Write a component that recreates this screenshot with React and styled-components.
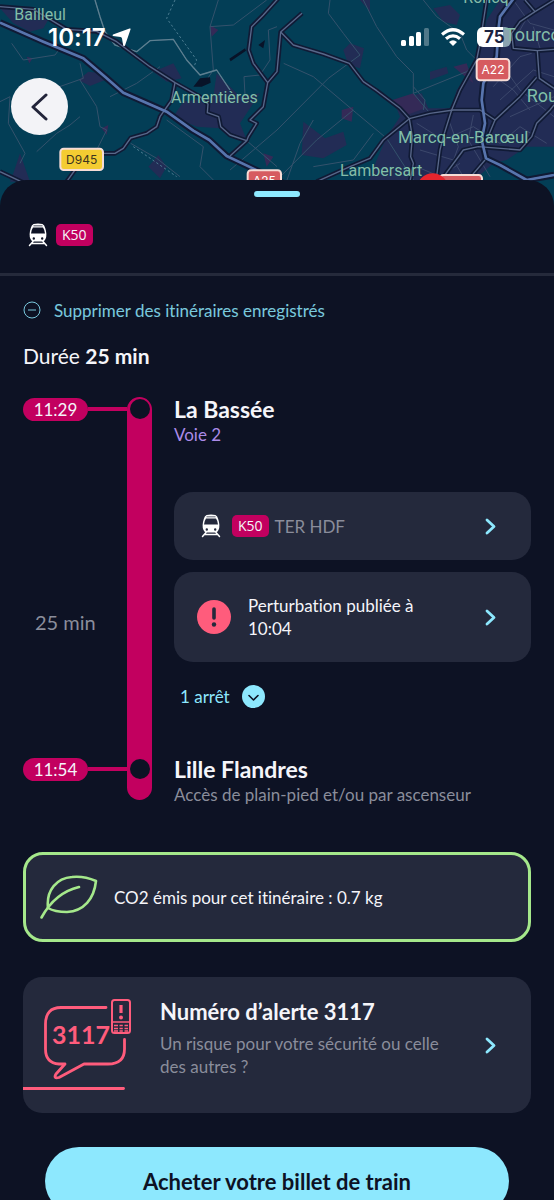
import React from "react";
import styled, { createGlobalStyle } from "styled-components";

const c = {
  night: "#0d1224",
  card: "#24293c",
  line: "#252a3b",
  magenta: "#c2005f",
  cyan: "#8de8fe",
  white: "#f5f5fa",
  grey: "#8a8d9b",
  coral: "#ff5c7c",
  green: "#a5e88b",
  violet: "#ab8be8",
};

const Global = createGlobalStyle`
  * { box-sizing: border-box; }
  body { margin: 0; background: ${c.night}; }
  button { font: inherit; color: inherit; border: 0; padding: 0; background: none; text-align: left; cursor: pointer; }
  h1, h2, p { margin: 0; }
  svg { display: block; flex: none; }
`;

const Screen = styled.div`
  height: 100vh;
  display: flex;
  flex-direction: column;
  overflow: hidden;
  background: ${c.night};
  color: ${c.white};
  font-family: Lato, "Open Sans", sans-serif;
  font-size: 17px;
  line-height: 23px;
  font-variant-ligatures: none;
`;

const MapArea = styled.header`
  position: relative;
  flex: none;
  height: 208px;
  background: #033e56;
`;

const MapSvg = styled.svg`
  width: 100%;
  height: 100%;
`;

const StatusBar = styled.div`
  position: absolute;
  inset: 22px 43px auto 48px;
  height: 30px;
  display: flex;
  align-items: center;
  gap: 12px;
  color: #fff;
  font-family: Inter, sans-serif;
`;

const Clock = styled.div`
  display: flex;
  align-items: center;
  gap: 6px;
  margin-right: auto;
  font-size: 24px;
  font-weight: 600;
`;

const Battery = styled.div`
  width: 34px;
  height: 20px;
  padding-left: 7px;
  border-radius: 6px;
  background: linear-gradient(90deg, #fff 76%, #8ba3b0 76%);
  color: #1c2340;
  font-size: 17px;
  font-weight: 700;
  line-height: 20px;
`;

const BackButton = styled.button`
  position: absolute;
  top: 78px;
  left: 11px;
  width: 57px;
  height: 57px;
  display: grid;
  place-items: center;
  border-radius: 50%;
  background: #f3f3f7;
`;

const Sheet = styled.main`
  position: relative;
  flex: 1;
  min-height: 0;
  margin-top: -28px;
  padding-top: 11px;
  overflow-y: auto;
  scrollbar-width: none;
  border-radius: 26px 26px 0 0;
  background: ${c.night};
`;

const Handle = styled.div`
  width: 46px;
  height: 6px;
  margin: 0 auto;
  border-radius: 3px;
  background: ${c.cyan};
`;

const LineHeader = styled.div`
  display: flex;
  align-items: center;
  gap: 8px;
  height: 79px;
  padding: 0 28px;
  border-bottom: 3px solid ${c.line};
`;

const LineBadge = styled.span`
  height: 22px;
  padding: 0 6px;
  border-radius: 5px;
  background: ${c.magenta};
  font-family: "Open Sans", sans-serif;
  font-size: 14px;
  line-height: 22px;
`;

const Body = styled.div`
  display: flex;
  flex-direction: column;
  padding: 22px 23px 24px;
`;

const RemoveButton = styled.button`
  display: flex;
  align-items: center;
  gap: 13px;
  height: 24px;
  color: ${c.cyan};
  opacity: 0.85;
`;

const Duration = styled.p`
  margin-top: 20px;
  font-size: 21px;
  line-height: 28px;
`;

const Timeline = styled.section`
  display: grid;
  grid-template-columns: 104px 25px 1fr;
  grid-template-rows: auto 1fr auto;
  margin-top: 27px;
`;

const TimeRow = styled.div`
  display: flex;
  align-items: center;
  height: 24px;
  grid-column: 1;
  &::after {
    content: "";
    flex: 1;
    height: 4px;
    background: ${c.magenta};
  }
`;

const TimePill = styled.time`
  width: 65px;
  height: 23px;
  border-radius: 12px;
  background: ${c.magenta};
  text-align: center;
`;

const Rail = styled.div`
  grid-column: 2;
  grid-row: 1 / 4;
  display: flex;
  flex-direction: column;
  align-items: center;
  justify-content: space-between;
  margin-bottom: 7px;
  padding: 2px 0 21px;
  border-radius: 13px;
  background: ${c.magenta};
`;

const Dot = styled.span`
  width: 20px;
  height: 20px;
  border-radius: 50%;
  background: ${c.night};
`;

const Stop = styled.div`
  grid-column: 3;
  padding-left: 22px;
  min-height: 50px;
`;

const StopName = styled.h2`
  margin-bottom: 2px;
  font-size: 23px;
  font-weight: 700;
  line-height: 24px;
`;

const StopNote = styled.p`
  color: ${(p) => p.$color};
`;

const LegTime = styled.div`
  grid-column: 1;
  align-self: center;
  padding: 40px 0 0 12px;
  color: ${c.grey};
  font-size: 20px;
`;

const Leg = styled.div`
  grid-column: 3;
  display: flex;
  flex-direction: column;
  align-items: stretch;
  gap: 12px;
  padding: 45px 0 48px 22px;
`;

const Card = styled.button`
  display: flex;
  align-items: center;
  min-height: ${(p) => p.$height}px;
  padding-right: 34px;
  padding-left: ${(p) => p.$inset}px;
  gap: ${(p) => p.$gap}px;
  border-radius: 19px;
  background: ${c.card};
`;

const CardText = styled.span`
  flex: 1;
  color: ${(p) => (p.$muted ? c.grey : c.white)};
`;

const LineGroup = styled.span`
  flex: 1;
  display: flex;
  align-items: center;
  gap: 6px;
`;

const StopsToggle = styled.button`
  display: flex;
  align-items: center;
  align-self: flex-start;
  gap: 12px;
  height: 24px;
  margin: 10px 0 1px 6px;
  color: ${c.cyan};
`;

const CarbonCard = styled.section`
  display: flex;
  align-items: center;
  gap: 16px;
  height: 90px;
  margin-top: 45px;
  padding-left: 14px;
  border: 3px solid ${c.green};
  border-radius: 20px;
  background: ${c.card};
`;

const AlertCard = styled(Card)`
  margin-top: 35px;
`;

const AlertText = styled.span`
  flex: 1;
  display: flex;
  flex-direction: column;
  gap: 8px;
  padding-bottom: 12px;
  color: ${c.grey};
`;

const AlertTitle = styled.strong`
  color: ${c.white};
  font-size: 22px;
  line-height: 24px;
`;

const BuyButton = styled.button`
  height: 68px;
  margin: 34px 22px 0;
  border-radius: 34px;
  background: ${c.cyan};
  color: ${c.night};
  font-size: 22px;
  font-weight: 700;
  text-align: center;
`;

const TrainIcon = () => (
  <svg width="20" height="24" viewBox="0 0 20 24" aria-hidden="true">
    <path
      fill="#fff"
      fillRule="evenodd"
      d="M5.500 1Q10 0 14.500 1Q16.500 2 17.200 5Q19.500 12 17.500 16Q16.500 18 15 18.500H5Q3.500 18 2.500 16Q0.500 12 2.800 5Q3.500 2 5.500 1ZM5.500 2.500V3.200H14.500V2.500ZM5 4.500Q3.300 7 3 10.500H17Q16.700 7 15 4.500ZM5.800 14.300A1.200 1.200 0 1 0 5.800 16.700A1.200 1.200 0 1 0 5.800 14.300ZM14.200 14.300A1.200 1.200 0 1 0 14.200 16.700A1.200 1.200 0 1 0 14.200 14.300Z"
    />
    <path d="M5 18.500L1.500 22.500M15 18.500L18.500 22.500M4 20.500H16" stroke="#fff" strokeWidth="1.500" strokeLinecap="round" />
  </svg>
);

const Chevron = () => (
  <svg width="12" height="17" viewBox="0 0 12 17" fill="none" stroke={c.cyan} strokeWidth="2.800" strokeLinecap="round" strokeLinejoin="round" aria-hidden="true">
    <path d="M2 2L9 8.500L2 15" />
  </svg>
);

const LeafIcon = () => (
  <svg width="58" height="44" viewBox="0 0 58 44" fill="none" stroke={c.green} strokeWidth="2.600" strokeLinecap="round" strokeLinejoin="round" aria-hidden="true">
    <path d="M8 33C6 15 17 3 32 2C41 1 49 3 56 6C54 24 44 36 27 37C19 37 13 36 8 33" />
    <path d="M1.500 42.500C10 27 22 16 39 12" />
  </svg>
);

const AlertIcon = () => (
  <svg width="110" height="136" viewBox="0 0 110 136" fill="none" stroke={c.coral} strokeWidth="2.800" strokeLinecap="round" strokeLinejoin="round" aria-hidden="true">
    <path d="M83 30.500H38Q22.500 30.500 22.500 47V72Q22.500 86 36 87H42L33 97Q30 102 36 100.500L61 87H85Q101.500 87 101.500 72V62.500" />
    <path d="M0 111.500H100.500" strokeWidth="2.800" />
    <rect x="89" y="23" width="18" height="33" rx="2.500" strokeWidth="2" />
    <path d="M98 28V36" strokeWidth="3.200" strokeLinecap="butt" />
    <circle cx="98" cy="40.500" r="2" fill={c.coral} stroke="none" />
    <path d="M89 45H107" strokeWidth="1.600" />
    <path d="M91 48.500H95M96.500 48.500H99.800M101.500 48.500H105M91 51.500H95M96.500 51.500H99.800M101.500 51.500H105M91 54H95M96.500 54H99.800M101.500 54H105" strokeWidth="1.500" strokeLinecap="butt" />
    <text x="58" y="67" textAnchor="middle" fontFamily="Lato, sans-serif" fontWeight="700" fontSize="25" fill={c.coral} stroke="none">3117</text>
  </svg>
);

const trunkRoads = [
  "M0 68L130 125L250 175L315 230L370 278L500 335L580 392L628 420L680 468L760 506L850 550",
  "M0 20L100 28L200 88L290 94L350 125L450 200L525 248L600 290L624 312L622 338L656 350L662 380L690 405L740 422L690 468",
  "M835 -5L790 45L755 80L746 150L760 190L803 248L831 215L842 96L906 40",
  "M525 248L515 300L480 350L470 380L440 400L392 414L370 445L345 460H300M225 510L200 545M0 515L70 548",
  "M803 248L790 320L750 360L770 370L745 410L740 422",
  "M842 96L880 135L970 162L1048 190L1090 245L1130 272L1200 325L1228 356L1290 340L1360 330L1440 330L1485 360L1560 290L1610 232",
  "M1228 356L1150 420L1110 475L1050 500L950 545M1228 356L1237 410L1232 470L1240 490L1230 545",
  "M1460 0L1440 130L1430 180L1380 270L1355 330L1330 410L1320 450L1308 545",
  "M1545 -10L1500 50L1495 90L1490 170L1450 250L1445 300L1455 370L1445 420L1458 475L1500 495L1580 540L1662 525",
  "M1320 545L1390 450L1435 440L1560 450L1595 410L1610 370L1650 330L1662 315",
  "M1575 0L1605 35L1662 0M1605 35L1560 65L1535 100L1540 145L1612 152L1662 148M1612 152L1618 235L1662 265M1455 480L1400 545M1485 360L1460 420",
];

const minorRoads = [
  "M285 0L300 50L315 95L345 135L410 155L450 122L520 118L560 180L600 225L650 210L690 270",
  "M35 130L70 180L165 165L180 145M0 305L30 290L25 370L75 460L60 490",
  "M110 455L170 400L210 375L240 350M240 240L290 320L300 380L320 390L275 480",
  "M655 0L630 80L640 210L620 240M630 80L700 75L800 0M240 190L250 235L150 270",
  "M735 285L732 230L780 225L810 180L805 90L831 80M392 430L470 475L540 530M500 360L610 440L600 500L640 540",
  "M480 200L410 250L330 290M740 422L831 500M690 510L831 390L985 235L1080 165L1030 100L985 40L990 0",
  "M851 190L940 230L1070 340L1160 415L1240 540M831 540L950 420L1060 330M1090 0L1130 80L1190 170L1240 220L1240 280",
  "M1240 280L1400 215L1450 180M1240 280L1290 340M1270 0L1310 50L1380 100L1400 150L1440 190M861 540L900 430L940 360",
  "M1240 260L1275 300L1270 330M940 500L1060 480L1120 400",
];

const townStreets = [
  "M1250 370L1330 420L1420 380L1500 430M1260 450L1360 480L1390 530M1350 370L1375 440L1350 510M1420 345L1405 420L1470 530",
  "M1480 260L1560 170L1595 160M1500 300L1600 210L1662 230M1470 220L1540 270L1590 330M1510 200L1560 270L1662 350M1530 350L1662 290",
  "M1540 0L1590 70L1662 90M1600 20L1560 90L1540 120M1600 80L1620 145M1500 430L1560 380L1640 430M1250 500L1320 530L1380 490",
];

const towns = [
  "M0 25L90 20L150 50L130 85L90 95L40 70Z",
  "M235 240L265 215L310 220L315 240L270 258Z",
  "M460 215L520 190L545 235L500 245Z",
  "M550 305L640 290L650 220L720 290L780 280L720 370L740 420L660 385L590 380L520 350Z",
  "M445 500L475 465L500 500L480 535Z",
  "M40 520L60 460L90 545H30Z",
  "M1030 150L1050 130L1092 145L1080 205L1045 195Z",
  "M1300 25L1350 15L1380 45L1370 75L1330 65Z",
  "M910 365L975 415L1030 395L1040 435L970 475L905 465Z",
  "M1290 240L1290 215L1340 200L1345 220Z",
  "M1080 0H1110V35Z",
  "M1100 560L1130 480L1160 410L1200 350L1180 300L1265 280L1285 325L1355 325L1370 270L1430 190L1460 60L1500 0H1662V440L1580 440L1520 480L1480 490L1400 560Z",
];

const MapLabel = ({ x, y, size = 48, children }) => (
  <text x={x} y={y} fontSize={size} fill="#84bda9" stroke="#0c3b50" strokeWidth="2" paintOrder="stroke">{children}</text>
);

const RoadSign = ({ x, y, width, fill, color, children }) => (
  <g>
    <rect x={x} y={y} width={width} height="64" rx="10" fill={fill} stroke="#f6dcd6" strokeWidth="6" />
    <text x={x + width / 2} y={y + 45} textAnchor="middle" fontFamily="Inter, sans-serif" fontSize="36" fill={color}>{children}</text>
  </g>
);

const RegionMap = () => (
  <MapSvg viewBox="0 0 1662 624" preserveAspectRatio="xMidYMin slice" fontFamily="Roboto, sans-serif" role="img" aria-label="Carte de Lille">
    <g fill="#222c55">{towns.map((d) => <path key={d} d={d} />)}</g>
    <g fill="#342a57">
      <path d="M1170 302L1240 280L1275 325L1220 345ZM630 75L655 90L635 110ZM305 385L325 375L320 405ZM80 170L98 175L88 190ZM1025 330L1060 320L1055 365L1025 355ZM790 460L820 470L800 500ZM1360 200L1400 190L1420 250Z" />
    </g>
    <g fill="none" strokeLinejoin="round">
      <g stroke="#34526c" strokeWidth="3">{minorRoads.map((d) => <path key={d} d={d} />)}</g>
      <g stroke="#414d70" strokeWidth="2.500">{townStreets.map((d) => <path key={d} d={d} />)}</g>
      <path d={minorRoads[0]} stroke="#5c7f90" strokeWidth="4" />
      <path d="M525 0L500 55L590 180L580 205M400 440L530 530" stroke="#4b7c91" strokeWidth="3" strokeDasharray="7 7" />
      <g stroke="#101a35" strokeWidth="14">{trunkRoads.map((d) => <path key={d} d={d} />)}</g>
      <g stroke="#101a35" strokeWidth="20"><path d={trunkRoads[0]} /><path d={trunkRoads[8]} /></g>
      <g stroke="#586789" strokeWidth="4">{trunkRoads.map((d) => <path key={d} d={d} />)}</g>
      <g stroke="#5875ae" strokeWidth="8"><path d={trunkRoads[0]} /><path d={trunkRoads[8]} /></g>
    </g>
    <path d="M580 260L600 235L630 232L632 248L605 260ZM688 176L735 145L738 152L692 184ZM775 135L795 120L790 145Z" fill="#081328" />
    <MapLabel x={43} y={61}>Bailleul</MapLabel>
    <MapLabel x={513} y={309}>Armentières</MapLabel>
    <MapLabel x={1390} y={8}>Roncq</MapLabel>
    <MapLabel x={1194} y={429} size={51}>Marcq-en-Barœul</MapLabel>
    <MapLabel x={1020} y={528}>Lambersart</MapLabel>
    <MapLabel x={1580} y={307} size={54}>Roubaix</MapLabel>
    <RoadSign x={181} y={446} width={128} fill="#f4cc32" color="#3d3420">D945</RoadSign>
    <RoadSign x={1430} y={177} width={98} fill="#d65b60" color="#fff">A22</RoadSign>
    <RoadSign x={743} y={511} width={100} fill="#d65b60" color="#fff">A25</RoadSign>
    <RoadSign x={1320} y={525} width={126} fill="#d65b60" color="#fff" />
    <circle cx="1298" cy="568" r="48" fill="#e6252d" />
  </MapSvg>
);

const OverlapLabel = styled.span`
  position: absolute;
  top: 23px;
  left: calc(100% - 49px);
  width: 49px;
  overflow: hidden;
  color: #84bda9;
  font: 18px/24px Roboto, sans-serif;
`;

export default function App() {
  return (
    <Screen>
      <Global />
      <MapArea>
        <RegionMap />
        <StatusBar>
          <Clock>
            10:17
            <svg width="19" height="19" viewBox="0 0 19 19" fill="#fff" aria-hidden="true">
              <path d="M17.500 0.500Q19 0 18.500 1.500L13 17.500Q12 19 11.200 17.500L10 10.500Q9.800 9.300 8.500 9L1 8Q0 7.300 1 6.500Z" />
            </svg>
          </Clock>
          <svg width="28" height="18" viewBox="0 0 28 18" fill="#fff" aria-hidden="true">
            <rect y="12" width="5" height="6" rx="1.500" />
            <rect x="8" y="8" width="5" height="10" rx="1.500" />
            <rect x="15" y="4" width="5" height="14" rx="1.500" />
            <rect x="23" width="5" height="18" rx="1.500" opacity=".3" />
          </svg>
          <svg width="24" height="18" viewBox="0 0 24 18" fill="none" stroke="#fff" strokeWidth="3.200" aria-hidden="true">
            <path d="M1 6.500Q12 -3 23 6.500M5 10.800Q12 5 19 10.800" />
            <path d="M8 14Q12 10.500 16 14L12 18Z" fill="#fff" stroke="none" />
          </svg>
          <Battery>75</Battery>
        </StatusBar>
        <OverlapLabel>Tourcoing</OverlapLabel>
        <BackButton aria-label="Retour">
          <svg width="18" height="28" viewBox="0 0 18 28" fill="none" stroke="#22243a" strokeWidth="3" strokeLinecap="round" strokeLinejoin="round" aria-hidden="true">
            <path d="M15 2L2 14L15 26" />
          </svg>
        </BackButton>
      </MapArea>

      <Sheet>
        <Handle />
        <LineHeader>
          <TrainIcon />
          <LineBadge>K50</LineBadge>
        </LineHeader>

        <Body>
          <RemoveButton>
            <svg width="18" height="18" viewBox="0 0 18 18" fill="none" stroke={c.cyan} aria-hidden="true">
              <circle cx="9" cy="9" r="8" />
              <path d="M5 9H13" />
            </svg>
            Supprimer des itinéraires enregistrés
          </RemoveButton>
          <Duration>Durée <b>25 min</b></Duration>

          <Timeline>
            <Rail><Dot /><Dot /></Rail>
            <TimeRow><TimePill>11:29</TimePill></TimeRow>
            <Stop>
              <StopName>La Bassée</StopName>
              <StopNote $color={c.violet}>Voie 2</StopNote>
            </Stop>
            <LegTime>25 min</LegTime>
            <Leg>
              <Card $height={68} $inset={27} $gap={11}>
                <TrainIcon />
                <LineGroup>
                  <LineBadge>K50</LineBadge>
                  <CardText $muted>TER HDF</CardText>
                </LineGroup>
                <Chevron />
              </Card>
              <Card $height={90} $inset={23} $gap={17}>
                <svg width="34" height="34" viewBox="0 0 34 34" aria-hidden="true">
                  <circle cx="17" cy="17" r="17" fill={c.coral} />
                  <path d="M17 9V18" stroke={c.card} strokeWidth="3.600" strokeLinecap="round" />
                  <circle cx="17" cy="24.500" r="2.200" fill={c.card} />
                </svg>
                <CardText>Perturbation publiée à<br />10:04</CardText>
                <Chevron />
              </Card>
              <StopsToggle aria-expanded="false">
                1 arrêt
                <svg width="23" height="23" viewBox="0 0 23 23" aria-hidden="true">
                  <circle cx="11.500" cy="11.500" r="11.500" fill={c.cyan} />
                  <path d="M7 10.500L11.500 15L16 10.500" fill="none" stroke={c.night} strokeWidth="1.600" strokeLinecap="round" strokeLinejoin="round" />
                </svg>
              </StopsToggle>
            </Leg>
            <TimeRow><TimePill>11:54</TimePill></TimeRow>
            <Stop>
              <StopName>Lille Flandres</StopName>
              <StopNote $color={c.grey}>Accès de plain-pied et/ou par ascenseur</StopNote>
            </Stop>
          </Timeline>

          <CarbonCard>
            <LeafIcon />
            <p>CO2 émis pour cet itinéraire : 0.7 kg</p>
          </CarbonCard>

          <AlertCard $height={136} $inset={0} $gap={27}>
            <AlertIcon />
            <AlertText>
              <AlertTitle>Numéro d’alerte 3117</AlertTitle>
              <span>Un risque pour votre sécurité ou celle des autres ?</span>
            </AlertText>
            <Chevron />
          </AlertCard>

          <BuyButton>Acheter votre billet de train</BuyButton>
        </Body>
      </Sheet>
    </Screen>
  );
}
